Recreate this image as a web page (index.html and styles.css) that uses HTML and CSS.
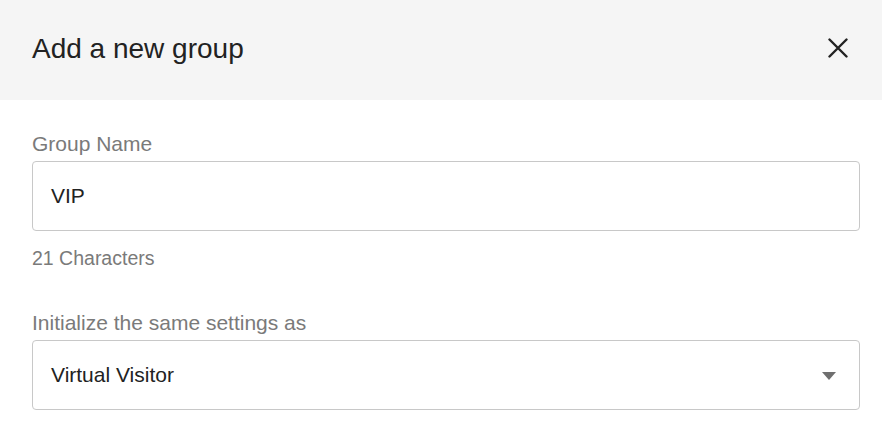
FILE: index.html
```html
<!DOCTYPE html>
<html>
<head>
<meta charset="utf-8">
<link rel="stylesheet" href="styles.css">
</head>
<body>
<div class="modal">
  <div class="header">
    <h1 class="title">Add a new group</h1>
    <button class="close" aria-label="Close">
      <svg width="20" height="20" viewBox="0 0 20 20"><path d="M1.5 1.5 L18.5 18.5 M18.5 1.5 L1.5 18.5" stroke="#222" stroke-width="2.4" stroke-linecap="round"/></svg>
    </button>
  </div>
  <div class="body">
    <label class="label">Group Name</label>
    <div class="field"><span class="value">VIP</span></div>
    <div class="helper">21 Characters</div>
    <label class="label label-second">Initialize the same settings as</label>
    <div class="field select">
      <span class="value">Virtual Visitor</span>
      <svg class="caret" width="14" height="8" viewBox="0 0 14 8"><path d="M0 0 H14 L7 8 Z" fill="#6f6f6f"/></svg>
    </div>
  </div>
</div>
</body>
</html>
```

FILE: styles.css
```css
* { box-sizing: border-box; }
html, body { margin: 0; padding: 0; background: #fff; }
body { font-family: "Liberation Sans", Arial, Helvetica, sans-serif; }
.modal { width: 882px; height: 442px; overflow: hidden; }
.header {
  height: 100px;
  background: #f5f5f5;
  display: flex;
  align-items: center;
  justify-content: space-between;
  padding: 0 34px 2px 32px;
}
.title { margin: 0; font-size: 28px; font-weight: normal; color: #222; line-height: 32px; }
.close { border: 0; background: none; padding: 0; width: 20px; height: 20px; display: flex; cursor: pointer; margin-top: -2px; }
.body { padding: 32px 22px 0 32px; display: flex; flex-direction: column; }
.label { font-size: 21px; line-height: 24px; color: #7a7a7a; margin-bottom: 5px; }
.label-second { margin-top: 41px; }
.field {
  height: 70px;
  border: 1px solid #c8c8c8;
  border-radius: 4px;
  display: flex;
  align-items: center;
  padding: 0 23px 0 18px;
}
.value { font-size: 21px; color: #222; }
.select { justify-content: space-between; }
.caret { margin-top: 2px; }
.helper { font-size: 19.5px; line-height: 24px; color: #7a7a7a; margin-top: 15px; }
```
